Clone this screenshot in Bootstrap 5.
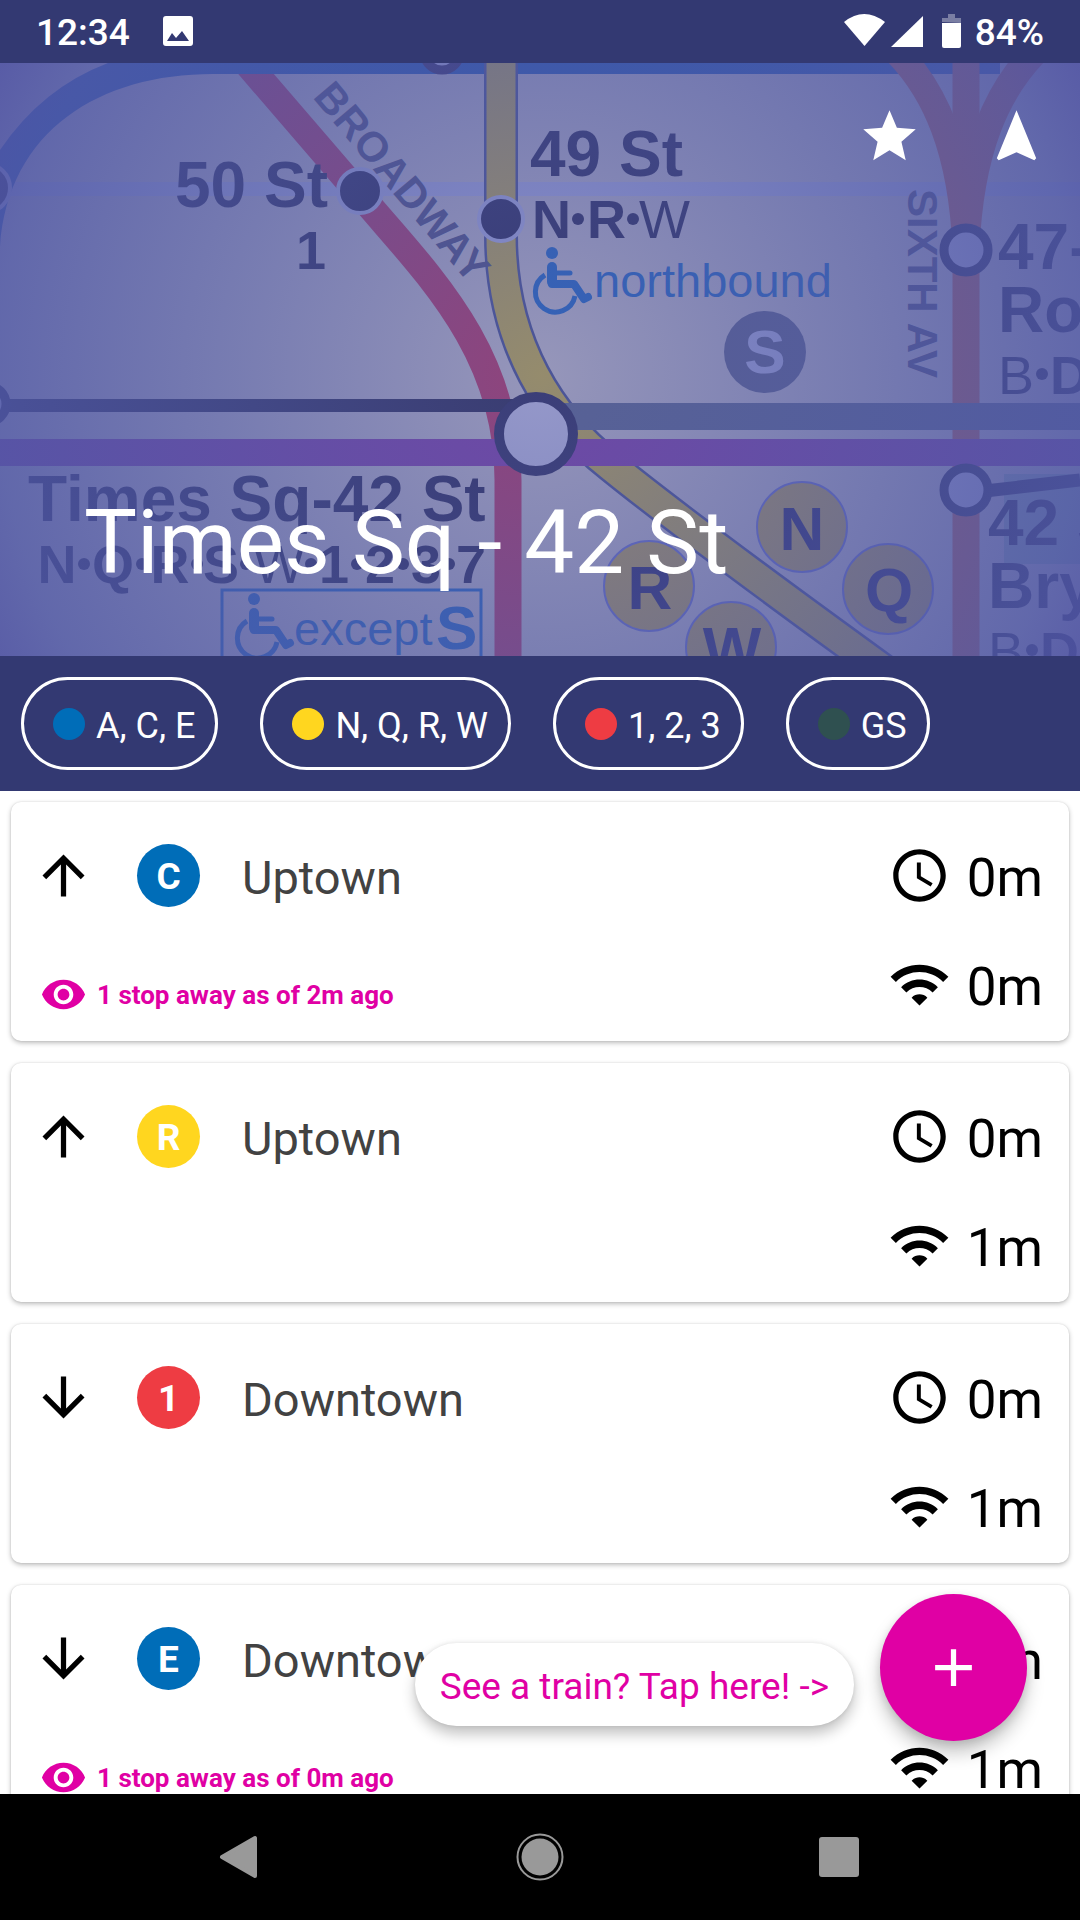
<!DOCTYPE html>
<html lang="en">
<head>
<meta charset="utf-8">
<meta name="viewport" content="width=device-width, initial-scale=1">
<title>Times Sq - 42 St</title>
<link href="https://cdn.jsdelivr.net/npm/bootstrap@5.3.0/dist/css/bootstrap.min.css" rel="stylesheet">
<style>
:root{--navy:#333972;--pink:#e000a4}
body{font-family:Roboto,"Liberation Sans",sans-serif;background:#fff}
button{background:none;border:0;padding:0;color:inherit}
svg{display:block;flex:none}
.i63{width:63px;height:63px}
.i47{width:47px;height:47px}
.bg-navy{background:var(--navy)}
.statusbar{height:63px;padding:0 36px;font-size:37px;font-weight:500;line-height:66px}
.status-icons{gap:6px}
.hero{display:grid;height:593px;flex:none;overflow:hidden}
.hero>*{grid-area:1/1;min-width:0;min-height:0}
.hero-map{width:100%;height:100%}
.hero-text{z-index:1;padding:42px 32px 60px 84px}
.hero-actions{gap:64px}
.hero h1{font-size:89px;line-height:106px;font-weight:400}
.filters{padding:21px;gap:42px}
.chip{height:93px;border:3px solid #fff;border-radius:47px;padding:4px 20px 0 29px;gap:11px;font-size:36px;line-height:44px}
.chip i{width:32px;height:32px;border-radius:50%;margin-top:-4px}
.c-blue{background:#006db8}.c-yellow{background:#ffd61f}.c-red{background:#ee3c43}.c-green{background:#2f5050}
.board{min-height:0}
.trains{height:100%;overflow:hidden;padding:11px;gap:22px}
.train{border:0;border-radius:10px;padding:42px 26px 20px 21px;flex:none;flex-direction:row;box-shadow:0 2px 5px rgba(0,0,0,.26),0 0 2px rgba(0,0,0,.12);color:#000}
.way{gap:42px}
.way span{line-height:68px;font-size:47px;color:#424242}
.way b{width:63px;height:63px;border-radius:50%;color:#fff;font-size:37px;line-height:66px;text-align:center}
.seen{margin-top:59px;padding-left:8px;gap:10px;color:var(--pink);font-size:26px;line-height:49px;font-weight:700}
.times{gap:41px}
.times div{gap:16px;font-size:53px;line-height:68px}
.actions{right:53px;bottom:53px;gap:26px}
.hint{background:#fff;color:var(--pink);border-radius:42px;height:83px;padding:4px 25px 0;font-size:37px;margin-bottom:15px;box-shadow:0 8px 14px rgba(0,0,0,.24),0 0 4px rgba(0,0,0,.1)}
.fab{width:147px;height:147px;border-radius:50%;background:var(--pink);color:#fff;box-shadow:0 12px 18px rgba(0,0,0,.22),0 3px 8px rgba(0,0,0,.12)}
.sysnav{height:126px;padding:0 90px;color:#999}
.map-lg{font:700 64px "Liberation Sans",sans-serif}
.map-md{font:700 54px "Liberation Sans",sans-serif}
.map-sm{font:400 47px "Liberation Sans",sans-serif}
.map-av{font:700 42px "Liberation Sans",sans-serif}
.map-rt{font:700 62px "Liberation Sans",sans-serif}
.thin{font-weight:400}
</style>
</head>
<body class="vh-100 d-flex flex-column overflow-hidden">
<svg width="0" height="0" class="position-absolute" aria-hidden="true">
  <symbol id="up" viewBox="0 0 24 24"><path fill="currentColor" d="M4 12l1.41 1.41L11 7.83V20h2V7.83l5.58 5.59L20 12l-8-8-8 8z"/></symbol>
  <symbol id="down" viewBox="0 0 24 24"><path fill="currentColor" d="M20 12l-1.41-1.41L13 16.17V4h-2v12.17l-5.58-5.59L4 12l8 8 8-8z"/></symbol>
  <symbol id="clock" viewBox="0 0 24 24"><path fill="currentColor" d="M11.99 2C6.47 2 2 6.48 2 12s4.47 10 9.99 10C17.52 22 22 17.52 22 12S17.52 2 11.99 2zM12 20c-4.42 0-8-3.58-8-8s3.58-8 8-8 8 3.58 8 8-3.58 8-8 8zm.5-13H11v6l5.25 3.15.75-1.23-4.500-2.67z"/></symbol>
  <symbol id="wifi" viewBox="0 0 24 24"><path fill="currentColor" d="M1 9l2 2c4.970-4.970 13.030-4.970 18 0l2-2C16.930 2.930 7.080 2.930 1 9zm8 8l3 3 3-3c-1.650-1.660-4.340-1.660-6 0zm-4-4l2 2c2.760-2.760 7.240-2.760 10 0l2-2C15.140 9.140 8.870 9.140 5 13z"/></symbol>
  <symbol id="eye" viewBox="0 0 24 24"><path fill="currentColor" d="M12 4.500C7 4.500 2.730 7.610 1 12c1.730 4.390 6 7.500 11 7.500s9.270-3.110 11-7.500c-1.730-4.390-6-7.500-11-7.500zM12 17c-2.760 0-5-2.240-5-5s2.240-5 5-5 5 2.240 5 5-2.240 5-5 5zm0-8c-1.660 0-3 1.340-3 3s1.340 3 3 3 3-1.340 3-3-1.340-3-3-3z"/></symbol>
</svg>

<div class="statusbar bg-navy text-white d-flex justify-content-between flex-shrink-0">
  <div class="d-flex">
    <span>12:34</span>
    <svg width="94" height="63" viewBox="-4 0 94 63" aria-hidden="true"><path fill="#fff" fill-rule="evenodd" d="M32 16h24a3 3 0 0 1 3 3v24a3 3 0 0 1-3 3H32a3 3 0 0 1-3-3V19a3 3 0 0 1 3-3zM33 41h22l-7-10-6 7-4-5z"/></svg>
  </div>
  <div class="status-icons d-flex">
    <svg width="125" height="63" viewBox="0 0 125 63" fill="#fff" aria-hidden="true">
      <path d="M0 22Q20 6 41 22L20.500 46z"/><path d="M79 16V47H47z"/>
      <path opacity=".35" d="M98 22v-4h6v-4h7v4h6v5z"/><path d="M98 23h19v23q0 2-2 2h-15q-2 0-2-2z"/>
    </svg>
    <span>84%</span>
  </div>
</div>

<header class="hero">
  <svg class="hero-map" viewBox="0 63 1080 593" preserveAspectRatio="xMidYMid slice" role="img" aria-label="Subway map around Times Square">
    <defs>
      <radialGradient id="tint" gradientUnits="userSpaceOnUse" cx="540" cy="375" r="620">
        <stop offset="0" stop-color="#5358a8" stop-opacity=".61"/>
        <stop offset=".5" stop-color="#5159a7" stop-opacity=".78"/>
        <stop offset=".88" stop-color="#5058a6" stop-opacity=".9"/>
        <stop offset="1" stop-color="#5054a4" stop-opacity=".95"/>
      </radialGradient>
      <g id="chair" fill="none" stroke="#0072ce" stroke-linecap="round" stroke-linejoin="round">
        <circle cx="17" cy="6" r="6" fill="#0072ce" stroke="none"/>
        <path stroke-width="10" d="M17 20V35"/><path stroke-width="8" d="M17 37H39L49 52L53 50"/><path stroke-width="5" d="M17 26H35"/>
        <path stroke-width="5" stroke-linecap="butt" d="M10 28A20 20 0 1 0 40 49"/>
      </g>
    </defs>
    <rect y="63" width="1080" height="593" fill="#fff8d6"/>
    <rect y="182" width="1080" height="14" fill="#e4eaff"/>
    <rect x="1004" y="474" width="76" height="90" fill="#7fc4a0" opacity=".6"/>
    <path d="M244 60L380 218C440 287 508 362 508 480V660" fill="none" stroke="#ee2536" stroke-width="27"/>
    <path d="M108 63H1000V74H213C100 74 8 130 0 247V150Q42 88 108 63z" fill="#0057b0"/>
    <circle cx="442" cy="52" r="18" fill="#eef" stroke="#1c1030" stroke-width="9"/>
    <g fill="none" stroke="#f5641f" stroke-width="27">
      <path d="M966 50V660"/><path d="M895 50C935 90 962 150 966 250"/><path d="M1037 50C997 90 970 150 966 250"/>
    </g>
    <g fill="none">
      <path d="M501 50V235C501 345 552 420 611 466Q690 530 893 677" stroke="#40507c" stroke-width="34"/>
      <path d="M501 50V235C501 345 552 420 611 466Q690 530 893 677" stroke="#fcdc10" stroke-width="29"/>
    </g>
    <rect x="540" y="403" width="540" height="27" fill="#5f7176"/>
    <rect y="399" width="520" height="13" fill="#101018"/>
    <rect y="439" width="1080" height="27" fill="#9a30a0"/>
    <path d="M985 491L1080 480" stroke="#14142a" stroke-width="13"/>
    <circle cx="536" cy="434" r="37" fill="#fff" stroke="#14142a" stroke-width="10"/>
    <g fill="#eef" stroke="#14142a" stroke-width="9">
      <circle cx="966" cy="250" r="22"/><circle cx="966" cy="490" r="22"/><circle cx="-12" cy="404" r="18"/>
    </g>
    <g fill="#0a0a1a" stroke="#e4eaff" stroke-width="4">
      <circle cx="360" cy="191" r="22"/><circle cx="501" cy="219" r="22"/><circle cx="-14" cy="188" r="24"/>
    </g>
    <g fill="#0a0a1a">
      <g class="map-lg">
        <text x="175" y="207">50 St</text><text x="530" y="176">49 St</text>
        <text x="998" y="269">47-50</text><text x="998" y="332">Rock</text>
        <text x="988" y="545">42 St</text><text x="988" y="608">Bryant</text>
        <text x="28" y="521">Times Sq-42 St</text>
      </g>
      <g class="map-md">
        <text x="296" y="269">1</text>
        <text y="238"><tspan x="532">N</tspan><tspan x="587">R</tspan><tspan x="639" class="thin">W</tspan></text>
        <text y="394"><tspan x="998" class="thin">B</tspan><tspan x="1050">D</tspan></text>
        <text y="670"><tspan x="988" class="thin">B</tspan><tspan x="1040">D</tspan></text>
        <text y="583" text-anchor="middle"><tspan x="57">N</tspan><tspan x="113">Q</tspan><tspan x="170">R</tspan><tspan x="221">S</tspan><tspan x="279" class="thin">W</tspan><tspan x="334">1</tspan><tspan x="380">2</tspan><tspan x="426">3</tspan><tspan x="471">7</tspan></text>
      </g>
      <g>
        <circle cx="578" cy="219" r="6"/><circle cx="633" cy="219" r="6"/><circle cx="1042" cy="374" r="6"/><circle cx="1032" cy="650" r="6"/>
        <circle cx="84" cy="564" r="6"/><circle cx="142" cy="564" r="6"/><circle cx="197" cy="564" r="6"/><circle cx="246" cy="564" r="6"/><circle cx="311" cy="564" r="6"/><circle cx="357" cy="564" r="6"/><circle cx="403" cy="564" r="6"/><circle cx="449" cy="564" r="6"/>
      </g>
    </g>
    <g class="map-av" fill="#484c60">
      <text transform="translate(312 97) rotate(50)">BROADWAY</text>
      <text transform="translate(908 189) rotate(90)">SIXTH AV</text>
    </g>
    <g fill="#0072ce">
      <text class="map-sm" x="594" y="297">northbound</text>
      <text class="map-sm" x="294" y="645">except</text>
      <text class="map-rt" x="436" y="649">S</text>
    </g>
    <rect x="222" y="590" width="259" height="90" fill="none" stroke="#0072ce" stroke-width="3"/>
    <use href="#chair" x="535" y="247"/><use href="#chair" x="237" y="593"/>
    <circle cx="765" cy="352" r="41" fill="#5f6872"/>
    <g fill="#f4cf18" stroke="#7884e0" stroke-width="2">
      <circle cx="802" cy="527" r="45"/><circle cx="888" cy="589" r="45"/><circle cx="649" cy="586" r="45"/><circle cx="731" cy="647" r="45"/>
    </g>
    <g class="map-rt" text-anchor="middle" fill="#0a0a34">
      <text x="765" y="373" fill="#e4eaff">S</text>
      <text x="802" y="550">N</text><text x="889" y="611">Q</text><text x="650" y="609">R</text><text x="732" y="670">W</text>
    </g>
    <rect y="63" width="1080" height="593" fill="url(#tint)"/>
  </svg>
  <div class="hero-text d-flex flex-column justify-content-between text-white">
    <div class="hero-actions d-flex justify-content-end">
      <button type="button" aria-label="Favorite"><svg class="i63" viewBox="0 0 24 24"><path fill="#fff" d="M12 17.270L18.180 21l-1.640-7.030L22 9.240l-7.190-.610L12 2 9.190 8.630 2 9.240l5.460 4.730L5.820 21z"/></svg></button>
      <button type="button" aria-label="Navigate"><svg class="i63" viewBox="0 0 24 24"><path fill="#fff" d="M12 2L4.500 20.290l.710.710L12 18l6.790 3 .710-.710z"/></svg></button>
    </div>
    <h1 class="m-0">Times Sq - 42 St</h1>
  </div>
</header>

<nav class="filters bg-navy text-white d-flex flex-shrink-0" aria-label="Lines">
  <button type="button" class="chip d-flex align-items-center"><i class="c-blue"></i>A, C, E</button>
  <button type="button" class="chip d-flex align-items-center"><i class="c-yellow"></i>N, Q, R, W</button>
  <button type="button" class="chip d-flex align-items-center"><i class="c-red"></i>1, 2, 3</button>
  <button type="button" class="chip d-flex align-items-center"><i class="c-green"></i>GS</button>
</nav>

<main class="board position-relative flex-fill">
  <div class="trains d-flex flex-column">
    <article class="card train justify-content-between">
      <div>
        <div class="way d-flex"><svg class="i63"><use href="#up"/></svg><b class="c-blue">C</b><span>Uptown</span></div>
        <div class="seen d-flex"><svg class="i47"><use href="#eye"/></svg>1 stop away as of 2m ago</div>
      </div>
      <div class="times d-flex flex-column">
        <div class="d-flex"><svg class="i63"><use href="#clock"/></svg>0m</div>
        <div class="d-flex"><svg class="i63"><use href="#wifi"/></svg>0m</div>
      </div>
    </article>
    <article class="card train justify-content-between">
      <div class="way d-flex"><svg class="i63"><use href="#up"/></svg><b class="c-yellow">R</b><span>Uptown</span></div>
      <div class="times d-flex flex-column">
        <div class="d-flex"><svg class="i63"><use href="#clock"/></svg>0m</div>
        <div class="d-flex"><svg class="i63"><use href="#wifi"/></svg>1m</div>
      </div>
    </article>
    <article class="card train justify-content-between">
      <div class="way d-flex"><svg class="i63"><use href="#down"/></svg><b class="c-red">1</b><span>Downtown</span></div>
      <div class="times d-flex flex-column">
        <div class="d-flex"><svg class="i63"><use href="#clock"/></svg>0m</div>
        <div class="d-flex"><svg class="i63"><use href="#wifi"/></svg>1m</div>
      </div>
    </article>
    <article class="card train justify-content-between">
      <div>
        <div class="way d-flex"><svg class="i63"><use href="#down"/></svg><b class="c-blue">E</b><span>Downtown</span></div>
        <div class="seen d-flex"><svg class="i47"><use href="#eye"/></svg>1 stop away as of 0m ago</div>
      </div>
      <div class="times d-flex flex-column">
        <div class="d-flex"><svg class="i63"><use href="#clock"/></svg>0m</div>
        <div class="d-flex"><svg class="i63"><use href="#wifi"/></svg>1m</div>
      </div>
    </article>
  </div>
  <div class="actions position-absolute d-flex align-items-end">
    <div class="hint d-flex align-items-center">See a train? Tap here! -&gt;</div>
    <button type="button" class="fab d-flex align-items-center justify-content-center" aria-label="Report a train"><svg class="i63" viewBox="0 0 24 24"><path fill="currentColor" d="M19 13h-6v6h-2v-6H5v-2h6V5h2v6h6v2z"/></svg></button>
  </div>
</main>

<footer class="sysnav bg-black d-flex flex-shrink-0">
  <button type="button" class="flex-fill d-flex align-items-center justify-content-center" aria-label="Back"><svg width="48" height="48" viewBox="0 0 48 48"><path fill="currentColor" stroke="currentColor" stroke-width="4" stroke-linejoin="round" d="M6 24L39 5V43z"/></svg></button>
  <button type="button" class="flex-fill d-flex align-items-center justify-content-center" aria-label="Home"><svg width="48" height="48" viewBox="0 0 48 48"><circle cx="24" cy="24" r="18.500" fill="currentColor"/><circle cx="24" cy="24" r="22.500" fill="none" stroke="currentColor" stroke-width="2"/></svg></button>
  <button type="button" class="flex-fill d-flex align-items-center justify-content-center" aria-label="Recent apps"><svg width="48" height="48" viewBox="0 0 48 48"><rect x="3" y="4" width="40" height="40" rx="3" fill="currentColor"/></svg></button>
</footer>
<script src="https://cdn.jsdelivr.net/npm/bootstrap@5.3.0/dist/js/bootstrap.bundle.min.js"></script>
</body>
</html>
